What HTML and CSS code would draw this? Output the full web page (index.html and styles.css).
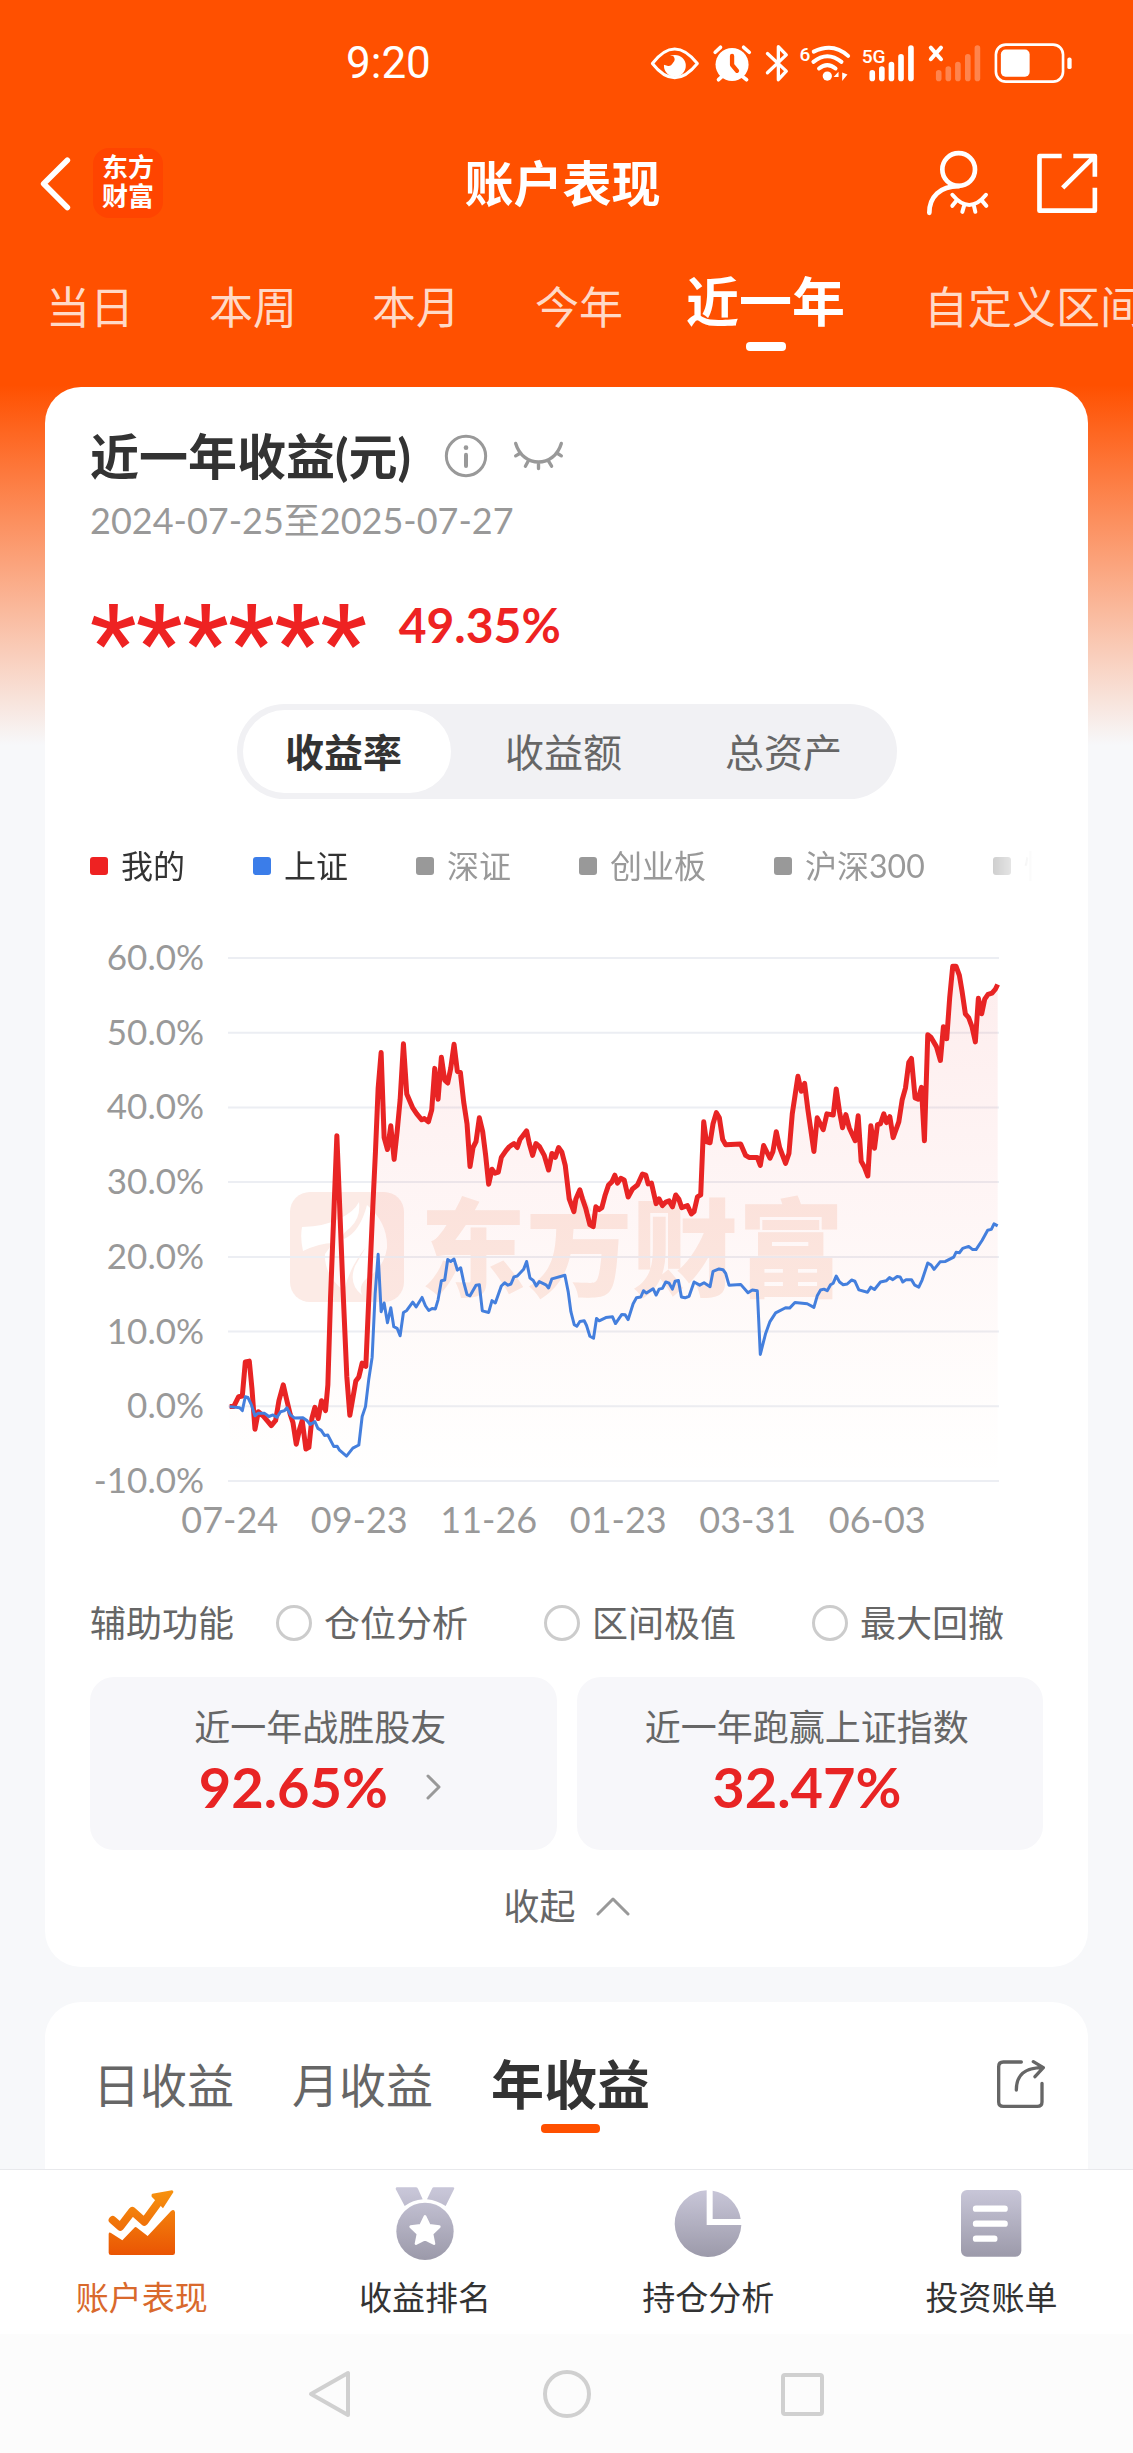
FILE: index.html
```html
<!DOCTYPE html>
<html lang="zh-CN">
<head>
    <meta charset="UTF-8">
    <meta name="viewport" content="width=device-width, initial-scale=1.0">
    <title>账户表现</title>
    <link rel="stylesheet" href="styles.css">
</head>
<body>
    <div class="status-bar">
        <span class="time">9:20</span>
        <svg class="status-icons" viewBox="85 65 1290 124" fill="none" stroke="#fff" stroke-linecap="round" stroke-linejoin="round">
            <!-- eye -->
            <path d="M93 127Q160 39 229 127Q160 213 93 127Z" stroke-width="9"/>
            <circle cx="161" cy="134" r="33" fill="#fff" stroke="none"/>
            <path d="M125 104H156Q165 114 156 124Q148 138 138 134L125 130Z" fill="#ff5000" stroke="none"/>
            <!-- alarm -->
            <circle cx="334" cy="130" r="50" fill="#fff" stroke="none"/>
            <path d="M283 93L299 78M369 78L386 93" stroke-width="11"/>
            <path d="M304 166L293 176M365 166L378 176" stroke-width="11"/>
            <path d="M334 104V131L349 149" stroke="#ff5000" stroke-width="13"/>
            <!-- bluetooth -->
            <path d="M441 97L498 150L474 176V76L498 101L441 155" stroke-width="10"/>
            <!-- wifi -->
            <text x="538" y="118" class="net-label">6</text>
            <path d="M581 91Q640 62 685 104M580 122Q622 88 665 122M597 142Q622 122 647 142" stroke-width="12"/>
            <circle cx="622" cy="165" r="14" fill="#fff" stroke="none"/>
            <path d="M641 168L656 152V180V168ZM667 154V180L683 160Z" fill="#fff" stroke="none"/>
            <!-- signal -->
            <text x="726" y="124" class="net-label">5G</text>
            <path d="M758 155V172M787 144V172M816 130V172M845 107V172M875 80V172" stroke-width="17"/>
            <path d="M935 79L966 114M966 79L935 114" stroke-width="12"/>
            <path d="M959 155V172M988 144V172M1017 130V172M1047 107V172M1076 80V172" stroke-width="17" stroke-opacity="0.3"/>
            <!-- battery -->
            <rect x="1132" y="70" width="203" height="112" rx="30" stroke-width="8"/>
            <rect x="1147" y="85" width="87" height="82" rx="14" fill="#fff" stroke="none"/>
            <rect x="1348" y="109" width="13" height="35" rx="6" fill="#fff" stroke="none"/>
        </svg>
    </div>

    <header class="header">
        <div class="header-left">
            <button class="icon-btn" aria-label="返回">
                <svg width="32" height="57" viewBox="60 100 96 170" fill="none" stroke="#fff" stroke-width="17" stroke-linecap="round" stroke-linejoin="round">
                    <path d="M142 115L71 186L142 257"/>
                </svg>
            </button>
            <div class="logo">东方<br>财富</div>
        </div>
        <h1>账户表现</h1>
        <div class="header-right">
            <button class="icon-btn" aria-label="隐身">
                <svg width="65" height="67" viewBox="915 385 195 200" fill="none" stroke="#fff" stroke-width="14" stroke-linecap="round">
                    <circle cx="1016" cy="443" r="49"/>
                    <path d="M1016 493C960 493 928 525 928 573"/>
                    <path d="M997 519Q1048 580 1098 519M1008 538L997 552M1032 553L1027 570M1062 553L1066 570M1087 538L1099 552" stroke-width="12"/>
                </svg>
            </button>
            <button class="icon-btn" aria-label="分享">
                <svg width="64" height="63" viewBox="1245 390 192 190" fill="none" stroke="#fff" stroke-width="14" stroke-linejoin="round">
                    <path d="M1325 402H1258V567H1425V498M1360 402H1425V465M1423 404L1328 498"/>
                </svg>
            </button>
        </div>
    </header>

    <nav class="period-tabs">
        <button>当日</button>
        <button>本周</button>
        <button>本月</button>
        <button>今年</button>
        <button class="active">近一年</button>
        <button>自定义区间</button>
    </nav>

    <main>
        <section class="card">
            <div class="title-row">
                <h2>近一年收益(元)</h2>
                <button class="icon-btn" aria-label="说明">
                    <svg width="44" height="44" viewBox="50 100 132 132" fill="none" stroke="#999" stroke-linecap="round">
                        <circle cx="116" cy="166" r="59" stroke-width="9"/>
                        <circle cx="116" cy="141" r="7" fill="#999" stroke="none"/>
                        <path d="M116 162V196" stroke-width="12"/>
                    </svg>
                </button>
                <button class="icon-btn" aria-label="显示金额">
                    <svg width="51" height="32" viewBox="258 118 152 95" fill="none" stroke="#999" stroke-width="10" stroke-linecap="round">
                        <path d="M266 128C288 202 380 202 402 128M278 158L266 165M391 158L402 165M303 181L295 196M334 188V203M364 181L373 196"/>
                    </svg>
                </button>
            </div>
            <p class="date-range">2024-07-25至2025-07-27</p>
            <div class="amount-row">
                <span class="stars">******</span>
                <span class="rate">49.35%</span>
            </div>

            <div class="segment">
                <button class="active">收益率</button>
                <button>收益额</button>
                <button>总资产</button>
            </div>

            <div class="legend">
                <span class="legend-item mine">我的</span>
                <span class="legend-item sh">上证</span>
                <span class="legend-item">深证</span>
                <span class="legend-item">创业板</span>
                <span class="legend-item">沪深300</span>
                <span class="legend-item">恒生</span>
            </div>

            <div class="chart">
                <div class="y-axis">
                    <span>60.0%</span>
                    <span>50.0%</span>
                    <span>40.0%</span>
                    <span>30.0%</span>
                    <span>20.0%</span>
                    <span>10.0%</span>
                    <span>0.0%</span>
                    <span>-10.0%</span>
                </div>
                <div class="plot">
                    <div class="watermark">
                        <svg width="114" height="110" viewBox="0 0 114 110">
                            <rect width="114" height="110" rx="20" fill="#fcebe6"/>
                            <path d="M12 35Q36 34 49 27Q64 20 69 10Q71 26 60 36Q50 43 54 47Q70 40 77 13Q98 31 97 56Q94 76 77 86Q68 94 72 103Q58 92 65 74Q70 65 76 55Q59 76 54 99Q34 83 35 62L43 51Q30 51 13 59Q10 46 12 35Z" fill="#fff"/>
                        </svg>
                        <span>东方财富</span>
                    </div>
                    <svg class="lines" viewBox="445 71 2316 1322" preserveAspectRatio="none">
                        <defs>
                            <linearGradient id="area" x1="0" y1="0" x2="0" y2="1">
                                <stop offset="0" stop-color="#ee2222" stop-opacity="0.08"/>
                                <stop offset="0.5" stop-color="#ee2222" stop-opacity="0.04"/>
                                <stop offset="1" stop-color="#ee6622" stop-opacity="0"/>
                            </linearGradient>
                        </defs>
                        <path class="grid-line" d="M445 71H2761M445 260H2761M445 449H2761M445 637H2761M445 827H2761M445 1015H2761M445 1204H2761M445 1393H2761"/>
                        <path id="mineArea" fill="url(#area)"/>
                        <path id="minePath" class="mine-line"/>
                        <path id="shPath" class="sh-line"/>
                    </svg>
                </div>
            </div>
            <div class="x-axis">
                <span>07-24</span>
                <span>09-23</span>
                <span>11-26</span>
                <span>01-23</span>
                <span>03-31</span>
                <span>06-03</span>
            </div>

            <div class="options">
                <span>辅助功能</span>
                <label><input type="checkbox">仓位分析</label>
                <label><input type="checkbox">区间极值</label>
                <label><input type="checkbox">最大回撤</label>
            </div>

            <div class="stats">
                <a class="stat" href="#">
                    <span class="stat-label">近一年战胜股友</span>
                    <span class="stat-value">92.65%
                        <svg width="16" height="26" viewBox="0 0 16 26" fill="none" stroke="#999" stroke-width="3" stroke-linecap="round" stroke-linejoin="round"><path d="M2 2L13 13L2 24"/></svg>
                    </span>
                </a>
                <div class="stat">
                    <span class="stat-label">近一年跑赢上证指数</span>
                    <span class="stat-value">32.47%</span>
                </div>
            </div>

            <button class="collapse">
                收起
                <svg width="34" height="20" viewBox="0 0 34 20" fill="none" stroke="#999" stroke-width="3" stroke-linecap="round" stroke-linejoin="round"><path d="M2 18L17 3L32 18"/></svg>
            </button>
        </section>

        <section class="card card-bottom">
            <div class="profit-tabs">
                <button>日收益</button>
                <button>月收益</button>
                <button class="active">年收益</button>
            </div>
            <button class="icon-btn" aria-label="分享收益">
                <svg width="52" height="52" viewBox="1125 90 156 156" fill="none" stroke="#666" stroke-width="10" stroke-linecap="round" stroke-linejoin="round">
                    <path d="M1204 102H1150Q1136 102 1136 116V222Q1136 235 1150 235H1252Q1266 235 1266 222V166M1189 186C1189 140 1215 119 1268 119M1240 101L1270 119L1245 146"/>
                </svg>
            </button>
        </section>
    </main>

    <nav class="bottom-nav">
        <a href="#" class="active">
            <svg width="70" height="74" viewBox="230 51 210 222">
                <defs>
                    <linearGradient id="orange" gradientUnits="userSpaceOnUse" x1="0" y1="60" x2="0" y2="255">
                        <stop offset="0" stop-color="#f7930f"/>
                        <stop offset="1" stop-color="#ea5504"/>
                    </linearGradient>
                </defs>
                <path d="M247 150L270 170L306 123L342 155L388 92" fill="none" stroke="url(#orange)" stroke-width="24" stroke-linecap="round" stroke-linejoin="round"/>
                <path d="M366 71L425 61Q430 62 429 67L398 115L376 92L364 80Q362 73 366 71Z" fill="url(#orange)"/>
                <path d="M235 192Q236 185 242 189L276 211L312 173Q316 169 320 173L352 198L422 123Q432 116 434 127V248Q434 255 427 255H242Q235 255 235 248Z" fill="url(#orange)"/>
            </svg>
            账户表现
        </a>
        <a href="#">
            <svg width="70" height="74" viewBox="1081 51 210 222">
                <defs>
                    <linearGradient id="gray1" gradientUnits="userSpaceOnUse" x1="0" y1="60" x2="0" y2="268">
                        <stop offset="0" stop-color="#c8c6d8"/>
                        <stop offset="1" stop-color="#9c9aaa"/>
                    </linearGradient>
                </defs>
                <path d="M1101 52H1158Q1163 52 1165 56L1179 88Q1150 90 1125 108L1098 57Q1098 52 1101 52ZM1213 52H1271Q1276 53 1273 58L1248 108Q1222 91 1192 88L1207 56Q1209 52 1213 52Z" fill="url(#gray1)"/>
                <circle cx="1186" cy="184" r="86" fill="url(#gray1)"/>
                <path d="M1186 139L1199 166L1229 170L1207 191L1213 221L1186 207L1159 221L1165 191L1143 170L1173 166Z" fill="#fff" stroke="#fff" stroke-width="8" stroke-linejoin="round"/>
            </svg>
            收益排名
        </a>
        <a href="#">
            <svg width="70" height="74" viewBox="160 471 210 222">
                <defs>
                    <linearGradient id="gray2" gradientUnits="userSpaceOnUse" x1="0" y1="480" x2="0" y2="680">
                        <stop offset="0" stop-color="#c8c6d8"/>
                        <stop offset="1" stop-color="#9c9aaa"/>
                    </linearGradient>
                </defs>
                <path d="M261 481V585H365A100 100 0 1 1 261 481ZM279 482V567H363A100 100 0 0 0 279 482Z" fill="url(#gray2)"/>
            </svg>
            持仓分析
        </a>
        <a href="#">
            <svg width="70" height="74" viewBox="1009 471 210 222">
                <rect x="1024" y="480" width="181" height="200" rx="18" fill="url(#gray2)"/>
                <path d="M1069 536H1155M1069 581H1155M1069 626H1124" stroke="#fff" stroke-width="19" stroke-linecap="round"/>
            </svg>
            投资账单
        </a>
    </nav>

    <div class="system-bar">
        <svg width="50" height="50" viewBox="0 0 50 50"><path d="M42 4V46L5 25Z"/></svg>
        <svg width="50" height="50" viewBox="0 0 50 50"><circle cx="25" cy="25" r="22"/></svg>
        <svg width="50" height="50" viewBox="0 0 50 50"><rect x="5" y="6" width="39" height="39" rx="2"/></svg>
    </div>

    <script src="chart.js"></script>
</body>
</html>
```
FILE: styles.css
```css
* {
    box-sizing: border-box;
}

body {
    font-family: Lato, "Noto Sans CJK SC", sans-serif;
    background: #f7f8fa linear-gradient(#ff5000 0, #ff5000 385px, #f7f8fa 745px) no-repeat;
    color: #333;
    margin: 0;
    min-height: 100vh;
    display: flex;
    flex-direction: column;
    overflow-x: hidden;
}

h1, h2, p {
    margin: 0;
}

button {
    font-family: inherit;
    color: inherit;
    background: none;
    border: none;
    padding: 0;
    cursor: pointer;
    white-space: nowrap;
}

a {
    color: inherit;
    text-decoration: none;
}

svg {
    display: block;
}

/* status bar */
.status-bar {
    height: 126px;
    padding: 0 55px 0 346px;
    display: flex;
    justify-content: space-between;
    align-items: center;
    color: #fff;
}

.time {
    font-family: Roboto, sans-serif;
    font-size: 44px;
}

.status-icons {
    width: 430px;
    height: 41px;
    overflow: visible;
}

.net-label {
    font-family: Roboto, sans-serif;
    font-size: 58px;
    font-weight: 500;
    fill: #fff;
    stroke: none;
}

/* header */
.header {
    height: 114px;
    padding: 0 34px 0 40px;
    display: grid;
    grid-template-columns: 1fr auto 1fr;
    align-items: center;
    color: #fff;
}

.header h1 {
    padding-right: 14px;
    font-size: 49px;
    font-weight: 700;
    line-height: 60px;
}

.header-left {
    display: flex;
    align-items: center;
    gap: 21px;
}

.header-right {
    display: flex;
    align-items: center;
    justify-content: flex-end;
    gap: 45px;
}

.logo {
    width: 70px;
    height: 70px;
    padding: 5px 0;
    border-radius: 16px;
    background-color: #ff4400;
    font-size: 26px;
    font-weight: 700;
    line-height: 29px;
    text-align: center;
}

.period-tabs {
    height: 147px;
    padding: 37px 0 0 46px;
    display: flex;
    align-items: flex-start;
    gap: 75px;
    overflow: hidden;
    color: #fff;
}

.period-tabs button {
    flex: none;
    font-size: 44px;
    font-weight: 400;
    line-height: 60px;
    color: #ffd9c7;
}

.period-tabs .active {
    margin: 0 4px 0 -12px;
    font-size: 53px;
    font-weight: 700;
    line-height: 50px;
    color: #fff;
}

.period-tabs .active::after,
.profit-tabs .active::after {
    content: "";
    display: block;
    width: 40px;
    height: 9px;
    margin: 15px auto 0;
    border-radius: 4px;
    background-color: #fff;
}

/* cards */
main {
    flex: 1;
    padding: 0 45px;
    display: flex;
    flex-direction: column;
    gap: 35px;
}

.card {
    padding: 39px 45px 41px;
    border-radius: 36px;
    background-color: #fff;
}

.title-row {
    display: flex;
    align-items: center;
    gap: 25px;
}

.title-row h2 {
    margin-right: 8px;
    font-size: 49px;
    font-weight: 700;
    line-height: 60px;
}

.date-range {
    margin-top: 14px;
    font-size: 36px;
    line-height: 40px;
    color: #999;
}

.amount-row {
    height: 60px;
    margin-top: 54px;
    display: flex;
    align-items: center;
    gap: 32px;
    color: #ee2222;
}

/* asterisks sit high in the line, so the box is taller than the row */
.stars {
    padding-top: 38px;
    font-family: Roboto, sans-serif;
    font-size: 104px;
    font-weight: 500;
    line-height: 60px;
}

.rate {
    font-size: 48px;
    font-weight: 700;
}

.segment {
    width: 660px;
    max-width: 100%;
    height: 95px;
    margin: 50px auto 0;
    padding: 6px;
    display: flex;
    gap: 12px;
    border-radius: 48px;
    background-color: #f1f1f4;
}

.segment button {
    flex: 1;
    padding: 0 6px 4px 0;
    border-radius: 42px;
    font-size: 39px;
    color: #666;
}

.segment .active {
    background-color: #fff;
    font-weight: 700;
    color: #333;
}

.legend {
    margin-top: 47px;
    display: flex;
    gap: 68px;
    overflow: hidden;
    -webkit-mask-image: linear-gradient(to right, #000 90%, transparent 99%);
    mask-image: linear-gradient(to right, #000 90%, transparent 99%);
}

.legend-item {
    flex: none;
    display: flex;
    align-items: center;
    gap: 13px;
    font-size: 32px;
    line-height: 40px;
    color: #999;
}

.legend-item::before {
    content: "";
    width: 18px;
    height: 18px;
    border-radius: 3px;
    background-color: #999;
}

.legend-item.mine,
.legend-item.sh {
    color: #333;
}

.mine::before {
    background-color: #ee2222;
}

.sh::before {
    background-color: #3b7de9;
}

/* chart */
.chart {
    margin-top: 54px;
    display: flex;
    gap: 24px;
}

.y-axis {
    width: 114px;
    height: 555px;
    display: flex;
    flex-direction: column;
    justify-content: space-between;
    align-items: flex-end;
    font-size: 35px;
    line-height: 32px;
    color: #999;
    white-space: nowrap;
}

.plot {
    position: relative;
    flex: 1;
    height: 523px;
    margin: 18px 44px 0 0;
}

.lines {
    position: relative;
    width: 100%;
    height: 100%;
    overflow: visible;
}

.lines path {
    vector-effect: non-scaling-stroke;
}

.grid-line {
    stroke: #eceef3;
    stroke-width: 2;
}

.mine-line {
    fill: none;
    stroke: #e82424;
    stroke-width: 5;
    stroke-linejoin: round;
}

.sh-line {
    fill: none;
    stroke: #447fdd;
    stroke-width: 3;
    stroke-linejoin: round;
}

.watermark {
    position: absolute;
    left: 62px;
    top: 234px;
    display: flex;
    align-items: center;
    gap: 16px;
    font-size: 106px;
    font-weight: 900;
    line-height: 110px;
    color: #fcebe4;
    white-space: nowrap;
}

.x-axis {
    margin: 4px 101px 0 75px;
    display: flex;
    font-size: 36px;
    line-height: 40px;
    color: #999;
}

.x-axis span {
    flex: 1;
    text-align: center;
}

.options {
    margin-top: 64px;
    display: flex;
    gap: 76px;
    font-size: 36px;
    line-height: 40px;
    color: #666;
    white-space: nowrap;
}

.options span {
    margin-right: -34px;
}

.options label {
    display: flex;
    align-items: center;
    gap: 12px;
}

.options input {
    appearance: none;
    width: 36px;
    height: 36px;
    margin: 0;
    border: 3px solid #ccc;
    border-radius: 50%;
}

.stats {
    margin-top: 34px;
    display: flex;
    gap: 20px;
}

.stat {
    flex: 1;
    padding: 28px 6px 34px 0;
    display: flex;
    flex-direction: column;
    align-items: center;
    gap: 9px;
    border-radius: 24px;
    background-color: #f7f7fa;
}

.stat-label {
    font-size: 36px;
    line-height: 44px;
    color: #666;
}

.stat-value {
    display: flex;
    align-items: center;
    gap: 38px;
    font-size: 56px;
    font-weight: 700;
    line-height: 58px;
    color: #e82424;
}

.collapse {
    margin: 36px auto 0;
    display: flex;
    align-items: center;
    gap: 20px;
    font-size: 36px;
    line-height: 40px;
    color: #666;
}

.card-bottom {
    flex: 1;
    padding: 53px 41px 0 48px;
    display: flex;
    justify-content: space-between;
    align-items: flex-start;
    border-radius: 36px 36px 0 0;
}

.profit-tabs {
    display: flex;
    align-items: flex-start;
    gap: 58px;
}

.profit-tabs button {
    font-size: 47px;
    line-height: 60px;
    color: #666;
}

.profit-tabs .active {
    font-size: 53px;
    font-weight: 700;
    color: #333;
}

.profit-tabs .active::after {
    width: 59px;
    margin-top: 9px;
    background-color: #ff5000;
}

.card-bottom .icon-btn {
    margin-top: 3px;
}

/* bottom */
.bottom-nav {
    padding: 17px 0;
    display: flex;
    background-color: #fff;
    box-shadow: 0 -1px 0 #e8e9ec;
}

.bottom-nav a {
    flex: 1;
    display: flex;
    flex-direction: column;
    align-items: center;
    gap: 16px;
    font-size: 33px;
    line-height: 40px;
}

.bottom-nav .active {
    color: #d9692c;
}

.system-bar {
    height: 119px;
    display: flex;
    justify-content: center;
    align-items: center;
    gap: 186px;
    background-color: #fcfcfc;
}

.system-bar path,
.system-bar circle,
.system-bar rect {
    fill: none;
    stroke: #d0d0d0;
    stroke-width: 4;
    stroke-linejoin: round;
}
```
FILE: chart.js
```js
// x,y pairs in the viewBox units of the plot
var mine = '450,1205 462,1205 477,1180 488,1178 497,1092 509,1090 517,1160 526,1262 536,1218 550,1228 562,1240 575,1253 588,1240 598,1190 611,1150 622,1190 632,1225 640,1245 650,1300 660,1262 668,1240 679,1312 688,1308 697,1235 706,1207 716,1235 726,1190 738,1215 745,1150 753,930 772,520 790,900 802,1130 811,1227 829,1140 838,1130 848,1095 859,1103 868,930 880,700 888,560 896,400 905,310 914,525 924,555 934,495 944,580 953,510 962,430 972,288 982,415 1000,450 1012,465 1027,480 1035,477 1047,485 1057,455 1066,350 1076,428 1086,322 1096,380 1105,387 1114,350 1124,289 1134,358 1143,360 1153,435 1163,490 1172,598 1181,550 1190,535 1200,475 1210,510 1219,570 1228,643 1238,605 1247,615 1257,612 1266,575 1280,558 1290,548 1304,540 1314,550 1322,530 1342,508 1350,540 1360,570 1370,540 1380,547 1395,570 1408,607 1418,565 1428,575 1438,550 1448,562 1458,595 1470,680 1484,712 1490,680 1502,657 1510,680 1520,705 1532,745 1542,750 1550,700 1560,707 1568,702 1578,670 1588,645 1598,637 1607,620 1615,640 1625,628 1635,632 1647,675 1660,655 1675,645 1690,617 1700,620 1707,642 1717,640 1731,692 1740,680 1750,697 1760,688 1770,685 1780,700 1790,670 1799,680 1808,702 1825,697 1837,718 1845,712 1855,675 1865,670 1874,485 1882,535 1893,538 1902,490 1912,462 1921,475 1931,530 1940,543 1985,541 2000,570 2010,575 2035,575 2044,595 2054,545 2064,562 2073,577 2082,560 2092,510 2102,550 2120,590 2130,565 2140,465 2157,370 2167,408 2177,388 2187,455 2205,560 2215,475 2233,505 2244,465 2263,468 2272,402 2282,460 2291,500 2301,467 2311,500 2329,533 2338,470 2347,585 2357,600 2367,622 2376,495 2387,552 2396,492 2405,490 2415,465 2423,487 2433,472 2443,525 2460,485 2470,430 2480,400 2490,335 2498,325 2509,425 2518,428 2528,398 2537,533 2547,265 2557,272 2573,295 2585,330 2594,245 2604,275 2613,170 2622,92 2632,92 2642,115 2650,155 2660,212 2670,222 2680,245 2690,283 2699,173 2709,212 2718,175 2728,163 2740,160 2750,150 2757,138';
var sh = '450,1205 480,1208 488,1215 497,1180 505,1182 515,1200 526,1228 535,1222 555,1222 568,1230 580,1226 592,1232 603,1218 615,1215 622,1208 632,1225 645,1234 670,1233 682,1240 692,1250 706,1243 715,1260 725,1265 735,1278 745,1277 763,1306 773,1305 780,1315 801,1330 820,1310 838,1302 848,1230 858,1205 868,1135 878,1080 887,920 896,820 905,965 914,943 924,993 934,955 943,1003 953,1007 962,1026 972,967 982,962 1000,941 1010,953 1028,929 1038,950 1048,962 1058,957 1068,958 1076,935 1086,887 1096,885 1105,833 1114,838 1124,832 1134,860 1144,854 1153,890 1163,922 1172,925 1190,898 1200,897 1209,963 1228,967 1238,937 1248,943 1266,900 1276,892 1286,898 1295,895 1304,877 1314,875 1333,858 1342,838 1352,880 1362,886 1371,900 1380,889 1400,897 1408,905 1418,882 1457,873 1467,915 1475,965 1485,998 1493,1002 1502,990 1515,988 1522,1000 1532,1027 1543,1032 1552,982 1560,988 1580,980 1600,978 1609,995 1628,972 1638,973 1647,985 1662,945 1672,930 1685,928 1693,912 1702,918 1722,907 1731,923 1740,908 1750,906 1760,890 1770,893 1780,908 1788,888 1798,886 1807,928 1818,930 1830,926 1845,890 1862,898 1875,892 1893,902 1902,863 1920,857 1932,859 1940,868 1950,898 1985,896 2007,917 2020,910 2035,912 2044,1073 2060,1020 2073,990 2090,968 2120,955 2132,956 2148,942 2185,945 2205,954 2215,925 2225,910 2235,908 2245,912 2255,897 2263,893 2272,875 2282,890 2293,897 2305,895 2318,885 2328,888 2340,910 2366,916 2376,903 2387,909 2405,890 2422,887 2432,879 2442,884 2455,876 2464,877 2472,890 2482,884 2498,884 2508,898 2520,903 2530,885 2547,842 2557,847 2566,858 2584,839 2600,838 2625,827 2632,815 2642,816 2652,805 2670,800 2682,808 2692,808 2710,785 2727,759 2738,757 2746,743 2757,748';

document.getElementById('minePath').setAttribute('d', 'M' + mine);
document.getElementById('mineArea').setAttribute('d', 'M' + mine + ' V1393 H450 Z');
document.getElementById('shPath').setAttribute('d', 'M' + sh);
```
